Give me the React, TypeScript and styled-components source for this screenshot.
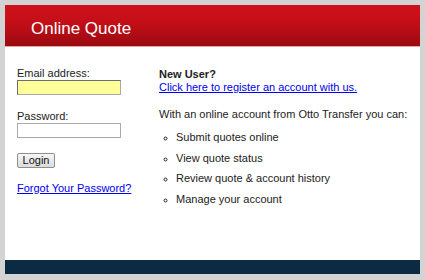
import styled, { createGlobalStyle } from 'styled-components';

const GlobalStyle = createGlobalStyle`
  body {
    margin: 0;
    background: #d3d3d3;
    font-family: "Liberation Sans", Arial, sans-serif;
  }
`

const Frame = styled.div`
  width: 425px;
  height: 280px;
  box-sizing: border-box;
  padding: 5px 5px 6px 5px;
`

const Panel = styled.div`
  height: 100%;
  background: #fff;
  display: flex;
  flex-direction: column;
`

const Header = styled.div`
  height: 41px;
  background: linear-gradient(#cf111b, #c50f18 40%, #9b0a10);
  border-bottom: 1px solid #e9a3a5;
  display: flex;
  align-items: center;
  padding-left: 26px;
`

const Title = styled.h1`
  margin: 0;
  color: #fff;
  font-size: 17px;
  font-weight: normal;
  padding-top: 6px;
`

const Content = styled.div`
  flex: 1;
  display: flex;
  padding: 20px 12px 0 12px;
  font-size: 11px;
  color: #222;
`

const LoginColumn = styled.form`
  width: 142px;
  display: flex;
  flex-direction: column;
  align-items: flex-start;
`

const Label = styled.label`
  line-height: 13px;
`

const Field = styled.input<{ $highlight?: boolean }>`
  width: 104px;
  height: 15px;
  box-sizing: border-box;
  margin: 0 0 15px 0;
  padding: 0 2px;
  border: 1px solid #aaa;
  border-top-color: ${p => p.$highlight ? '#6f6f6f' : '#aaa'};
  border-left-color: ${p => p.$highlight ? '#6f6f6f' : '#aaa'};
  background: ${p => p.$highlight ? '#ffff99' : '#fff'};
  font-size: 11px;
  outline: none;
`

const Button = styled.button`
  width: 38px;
  height: 15px;
  margin: 0 0 14px 0;
  padding: 0;
  border: 1px solid #8e8e8e;
  border-radius: 2px;
  background: linear-gradient(#f6f6f6, #dcdcdc);
  font-family: inherit;
  font-size: 11px;
  color: #111;
  line-height: 13px;
`

const Link = styled.a`
  color: #0000ee;
  text-decoration: underline;
  line-height: 13px;
`

const InfoColumn = styled.div`
  flex: 1;
  display: flex;
  flex-direction: column;
  align-items: flex-start;
`

const Heading = styled.strong`
  line-height: 13px;
  margin-top: 1px;
`

const Intro = styled.p`
  margin: 14px 0 0 0;
  line-height: 13px;
`

const List = styled.ul`
  margin: 10px 0 0 0;
  padding: 0 0 0 17px;
  list-style: circle;
`

const Item = styled.li`
  line-height: 13px;
  margin-bottom: 7.7px;

  &::marker {
    font-size: 9px;
  }
`

const Footer = styled.div`
  height: 14px;
  background: #0b2a44;
`

const features = [
  'Submit quotes online',
  'View quote status',
  'Review quote & account history',
  'Manage your account',
]

const App = () => {
  return (
    <Frame>
      <GlobalStyle />
      <Panel>
        <Header>
          <Title>Online Quote</Title>
        </Header>
        <Content>
          <LoginColumn onSubmit={e => e.preventDefault()}>
            <Label htmlFor="email">Email address:</Label>
            <Field id="email" type="text" $highlight />
            <Label htmlFor="password">Password:</Label>
            <Field id="password" type="password" />
            <Button type="submit">Login</Button>
            <Link href="#">Forgot Your Password?</Link>
          </LoginColumn>
          <InfoColumn>
            <Heading>New User?</Heading>
            <Link href="#">Click here to register an account with us.</Link>
            <Intro>With an online account from Otto Transfer you can:</Intro>
            <List>
              {features.map(f => <Item key={f}>{f}</Item>)}
            </List>
          </InfoColumn>
        </Content>
        <Footer />
      </Panel>
    </Frame>
  )
}

export default App;
